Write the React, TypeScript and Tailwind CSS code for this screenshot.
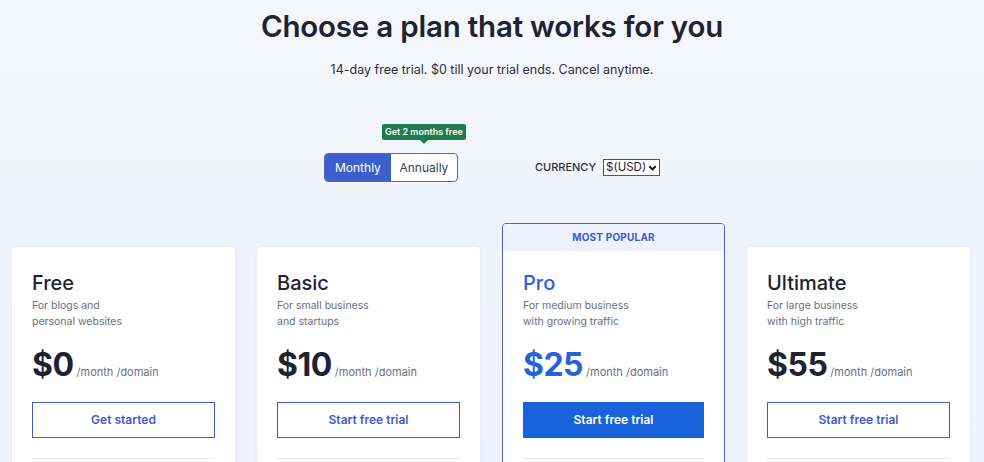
import { useState } from "react";

const plans = [
  {
    name: "Free",
    lines: ["For blogs and", "personal websites"],
    price: "$0",
    cta: "Get started",
    popular: false,
  },
  {
    name: "Basic",
    lines: ["For small business", "and startups"],
    price: "$10",
    cta: "Start free trial",
    popular: false,
  },
  {
    name: "Pro",
    lines: ["For medium business", "with growing traffic"],
    price: "$25",
    cta: "Start free trial",
    popular: true,
  },
  {
    name: "Ultimate",
    lines: ["For large business", "with high traffic"],
    price: "$55",
    cta: "Start free trial",
    popular: false,
  },
];

const font = { fontFamily: "Inter, 'Noto Sans', sans-serif" };

const PlanCard = ({ plan }: { plan: (typeof plans)[number] }) => {
  const body = (
    <div className="px-5 pt-[24px] pb-6">
      <h3
        className={`text-[20px] font-medium leading-[24px] ${
          plan.popular ? "text-[#2563d6]" : "text-[#1e2235]"
        }`}
      >
        {plan.name}
      </h3>
      <p className="mt-[3px] text-[10.5px] leading-[16px] text-[#6b6f80]">
        {plan.lines[0]}
        <br />
        {plan.lines[1]}
      </p>
      <div className="mt-[14px] flex items-baseline gap-[3px]">
        <span
          className={`text-[32px] font-bold leading-[42px] tracking-[-0.5px] ${
            plan.popular ? "text-[#2563d6]" : "text-[#1e2235]"
          }`}
        >
          {plan.price}
        </span>
        <span className="text-[11px] text-[#6b6f80]">/month /domain</span>
      </div>
      <button
        className={`mt-[16px] flex h-[36px] w-full items-center justify-center text-[12px] font-semibold ${
          plan.popular
            ? "bg-[#1863dc] text-white"
            : "border border-[#3d5ccc] bg-white text-[#3d5ccc]"
        }`}
      >
        {plan.cta}
      </button>
      <div className="mt-[20px] h-px bg-[#e3e7f2]" />
      <div className="h-[120px]" />
    </div>
  );

  if (plan.popular) {
    return (
      <div className="overflow-hidden rounded-[4px] border border-[#4a66c9] bg-white">
        <div className="flex h-[27px] items-center justify-center bg-[#eef2fc] text-[10px] font-bold tracking-[0.2px] text-[#3d5ccc]">
          MOST POPULAR
        </div>
        <div className="-mt-[4px]">{body}</div>
      </div>
    );
  }

  return (
    <div className="mt-[24px] rounded-[4px] bg-white shadow-[0_1px_4px_rgba(40,60,120,0.05)]">
      {body}
    </div>
  );
};

export default function App() {
  const [billing, setBilling] = useState<"monthly" | "annually">("monthly");

  return (
    <div
      className="min-h-screen bg-[linear-gradient(180deg,#f5f7fb_0%,#eff3fc_40%,#edf2fd_100%)] text-[#1e2235]"
      style={font}
    >
      <div className="pt-[8px] text-center">
        <h1 className="text-[29.5px] font-semibold leading-[36px] tracking-[-0.2px] text-[#1e2235]">
          Choose a plan that works for you
        </h1>
        <p className="mt-[17px] text-[12.5px] leading-[18px] text-[#2c3046]">
          14-day free trial. $0 till your trial ends. Cancel anytime.
        </p>
      </div>

      <div className="mt-[74px] flex items-center justify-center gap-[77px]">
        <div className="relative">
          <div className="absolute -top-[29px] left-[58px] flex h-[16px] w-[84px] items-center justify-center rounded-[2px] bg-[#1b7d4c] text-[9px] font-semibold text-white">
            Get 2 months free
            <span className="absolute -bottom-[4px] left-1/2 h-0 w-0 -translate-x-1/2 border-x-[4px] border-t-[4px] border-x-transparent border-t-[#1b7d4c]" />
          </div>
          <div className="flex h-[29px] w-[134px] overflow-hidden rounded-[4px] border border-[#4a66c9] bg-white text-[12px]">
            <button
              onClick={() => setBilling("monthly")}
              className={`w-[66px] ${
                billing === "monthly" ? "bg-[#3b5fcf] text-white" : "text-[#3a3e52]"
              }`}
            >
              Monthly
            </button>
            <button
              onClick={() => setBilling("annually")}
              className={`flex-1 ${
                billing === "annually" ? "bg-[#3b5fcf] text-white" : "text-[#3a3e52]"
              }`}
            >
              Annually
            </button>
          </div>
        </div>

        <div className="flex items-center gap-[7px]">
          <span className="text-[11px] font-medium text-[#2c3046]">CURRENCY</span>
          <div className="relative">
            <select className="block h-[17px] w-[57px] appearance-none border border-[#555] bg-white pl-[2px] text-[11.5px] leading-none text-[#1e2235]">
              <option>$(USD)</option>
            </select>
            <svg
              className="pointer-events-none absolute right-[3px] top-[5px] h-[8px] w-[9px]"
              viewBox="0 0 10 8"
              fill="none"
              stroke="#111"
              strokeWidth="2.2"
            >
              <path d="M1.5 2 5 5.5 8.5 2" />
            </svg>
          </div>
        </div>
      </div>

      <div className="mt-[41px] grid grid-cols-4 items-start gap-[22px] pl-[12px] pr-[14px]">
        {plans.map((plan) => (
          <PlanCard key={plan.name} plan={plan} />
        ))}
      </div>
    </div>
  );
}
